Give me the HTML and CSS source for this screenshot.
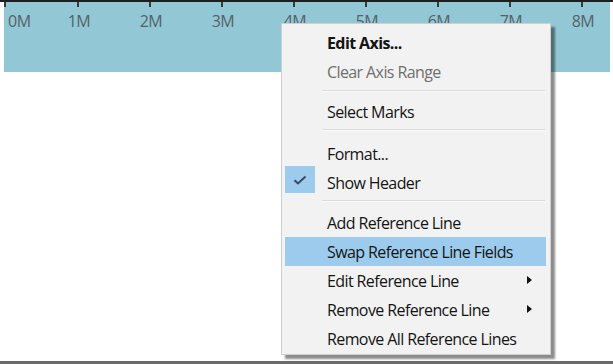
FILE: index.html
```html
<!DOCTYPE html>
<html>
<head>
<meta charset="utf-8">
<link rel="stylesheet" href="styles.css">
</head>
<body>
<div class="page">
  <div class="top-rule"></div>
  <div class="axis">
    <div class="tick first" style="left:0px"><span class="label">0M</span></div>
    <div class="tick" style="left:73px"><span class="label">1M</span></div>
    <div class="tick" style="left:145px"><span class="label">2M</span></div>
    <div class="tick" style="left:217px"><span class="label">3M</span></div>
    <div class="tick" style="left:289px"><span class="label">4M</span></div>
    <div class="tick" style="left:361px"><span class="label">5M</span></div>
    <div class="tick" style="left:433px"><span class="label">6M</span></div>
    <div class="tick" style="left:505px"><span class="label">7M</span></div>
    <div class="tick" style="left:577px"><span class="label">8M</span></div>
  </div>
  <div class="canvas"></div>
  <div class="bottom-rule"></div>

  <div class="menu">
    <div class="item bold">Edit Axis...</div>
    <div class="item disabled">Clear Axis Range</div>
    <div class="sep sep1"></div>
    <div class="item clipped">Select Marks</div>
    <div class="sep sep2"></div>
    <div class="item">Format...</div>
    <div class="item">
      <span class="check"><svg width="14" height="10" viewBox="0 0 14 10"><path d="M1.5 5.2 L5 8.5 L12.5 1.5" fill="none" stroke="#3a4a5a" stroke-width="2"/></svg></span>
      Show Header
    </div>
    <div class="sep sep3"></div>
    <div class="item">Add Reference Line</div>
    <div class="item active">Swap Reference Line Fields</div>
    <div class="item">Edit Reference Line<span class="arrow"></span></div>
    <div class="item">Remove Reference Line<span class="arrow"></span></div>
    <div class="item">Remove All Reference Lines</div>
  </div>
</div>
</body>
</html>
```

FILE: styles.css
```css
html, body {
  margin: 0;
  padding: 0;
  background: #ffffff;
}

.page {
  position: relative;
  width: 613px;
  height: 364px;
  display: flex;
  flex-direction: column;
  overflow: hidden;
  font-family: "Open Sans", "Noto Sans", sans-serif;
}

.top-rule {
  height: 2px;
  background: #1e1e1e;
}

.axis {
  position: relative;
  margin-left: 4px;
  width: 606px;
  height: 70px;
  background: #92c8d6;
}

.tick {
  position: absolute;
  top: 0;
  width: 0;
  height: 5px;
  border-left: 2px solid #3a3a3a;
}

.tick .label {
  position: absolute;
  top: 8px;
  left: 0;
  transform: translateX(-50%);
  font-size: 16px;
  line-height: 22px;
  color: #566168;
  white-space: nowrap;
  letter-spacing: -0.4px;
}

.tick.first .label {
  transform: none;
  left: 2px;
}

.canvas {
  flex: 1;
}

.bottom-rule {
  height: 3px;
  background: #6a6a6a;
}

.menu {
  position: absolute;
  left: 281px;
  top: 23px;
  width: 268px;
  padding: 4px 0 1px;
  background: #f2f2f2;
  border: 1px solid #cfcfcf;
  box-shadow: 4px 4px 2px rgba(0, 0, 0, 0.45);
  display: flex;
  flex-direction: column;
}

.item {
  position: relative;
  height: 29px;
  display: flex;
  align-items: center;
  padding-left: 42px;
  margin: 0 4px 0 3px;
  font-size: 16px;
  letter-spacing: -0.6px;
  color: #141414;
  white-space: nowrap;
}

.item.bold {
  font-weight: 700;
  letter-spacing: -0.6px;
}

.item.disabled {
  color: #6f6f6f;
}

.item.clipped {
  padding-top: 5px;
  height: 24px;
  overflow: hidden;
  align-items: flex-start;
  line-height: 22px;
}

.item.active {
  background: #9ccbee;
}

.sep {
  margin: 0 5px 0 40px;
  border-top: 1px solid #dadada;
  border-bottom: 1px solid #fafafa;
}

.sep1 { margin-top: 4px; margin-bottom: 4px; }
.sep2 { margin-top: 4px; margin-bottom: 8px; }
.sep3 { margin-top: 3px; margin-bottom: 6px; }

.check {
  position: absolute;
  left: 0;
  top: -2px;
  width: 30px;
  height: 27px;
  background: #9ccbee;
  display: flex;
  align-items: center;
  justify-content: center;
}

.arrow {
  position: absolute;
  left: 242px;
  top: 10px;
  width: 0;
  height: 0;
  border-top: 4px solid transparent;
  border-bottom: 4px solid transparent;
  border-left: 5px solid #111;
}
```
